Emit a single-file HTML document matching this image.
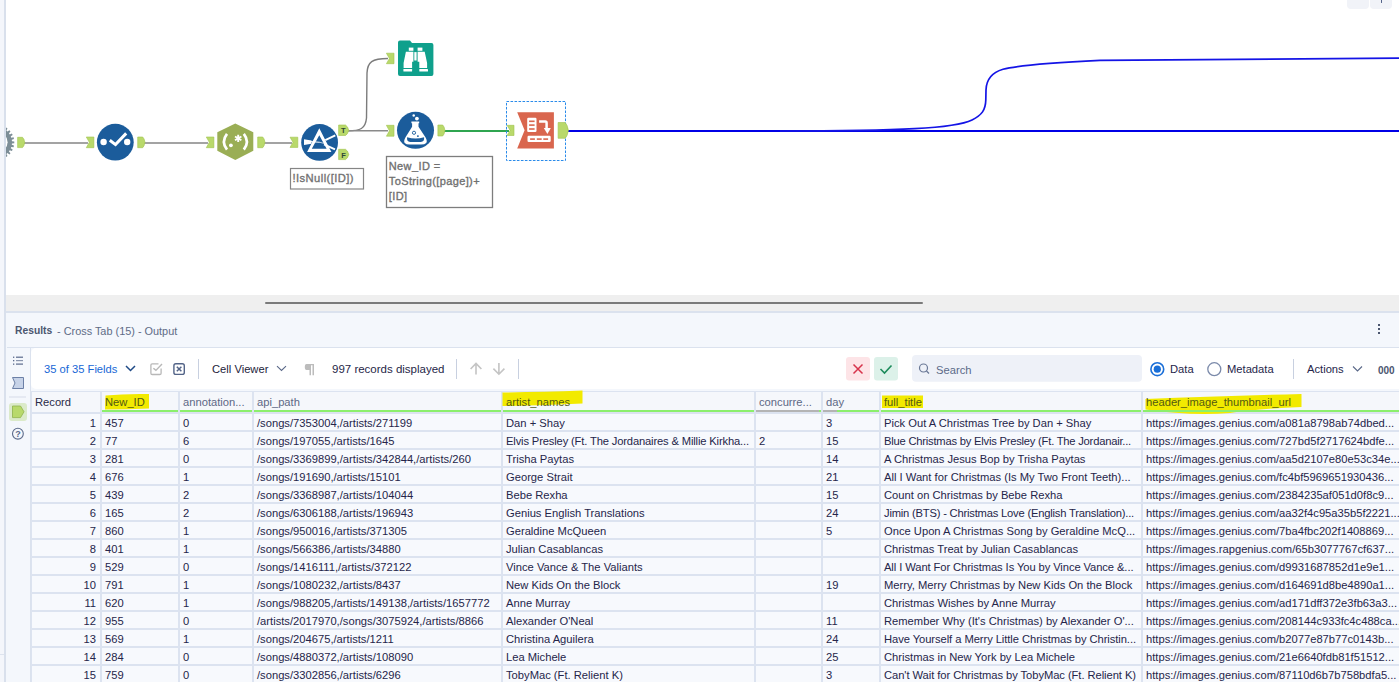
<!DOCTYPE html>
<html><head><meta charset="utf-8">
<style>
*{box-sizing:border-box;margin:0;padding:0}
html,body{width:1399px;height:682px;overflow:hidden;background:#fff;font-family:"Liberation Sans",sans-serif;position:relative}
.abs{position:absolute}
#canvas{position:absolute;left:0;top:0;width:1399px;height:295px;background:#fff}
#hscroll{position:absolute;left:5px;top:295px;width:1394px;height:16px;background:#efefef}
#thumb{position:absolute;left:260px;top:7px;width:658px;height:2px;background:#7a7a7a;border-radius:1px}
#leftstrip{position:absolute;left:0;top:0;width:6px;height:682px;background:#f4f6fb;border-right:2px solid #d9e0ec}
#results{position:absolute;left:5px;top:311px;width:1394px;height:371px;background:#f4f7fc;border-top:2px solid #dbe2ee}
.t{position:absolute;white-space:nowrap;font-size:11.2px;line-height:14px}
.td{color:#25254a}
.tb{position:absolute;white-space:nowrap;font-size:11.4px;line-height:14px}
</style></head><body>
<div id="canvas">
<svg width="1399" height="295" viewBox="0 0 1399 295" style="position:absolute;left:0;top:0">
<path d="M24 143H88" stroke="#a3a3a3" stroke-width="2" fill="none"/>
<path d="M144 143H208" stroke="#a3a3a3" stroke-width="2" fill="none"/>
<path d="M264 143H292" stroke="#a3a3a3" stroke-width="2" fill="none"/>
<path d="M348 130.8C360 130.8 365.5 129 366.5 118L367 73C367.5 62 372 58.5 388 58.5" stroke="#7c7c7c" stroke-width="1.4" fill="none"/>
<path d="M348 130.8H388" stroke="#8a8a8a" stroke-width="1.6" fill="none"/>
<path d="M444 131H509" stroke="#2fa550" stroke-width="2" fill="none"/>
<path d="M567 131H1399" stroke="#0000e6" stroke-width="2" fill="none"/>
<path d="M780 131C900 131 955 128.5 972 120C982 115 985.5 110 985.8 100L986 90C986.3 80 990.5 73 1003 69.3C1015 66 1040 63.3 1100 60.4C1200 58.8 1300 58.3 1399 58.2" stroke="#1414e6" stroke-width="1.7" fill="none"/>
<path d="M11.96 141.21 L14.28 141.46 L14.28 143.14 L11.96 143.39 L11.79 144.83 L13.98 145.62 L13.58 147.25 L11.27 146.94 L10.75 148.29 L12.69 149.59 L11.91 151.07 L9.74 150.21 L8.92 151.41 L10.49 153.13 L9.38 154.38 L7.48 153.03 L6.39 154.00 L7.50 156.05 L6.13 157.00 L4.60 155.23 L3.32 155.90 L3.91 158.16 L2.35 158.75 L1.29 156.67 L-0.12 157.02 L-0.09 159.35 L-1.75 159.55 L-2.28 157.28 L-3.72 157.28 L-4.25 159.55 L-5.91 159.35 L-5.88 157.02 L-7.29 156.67 L-8.35 158.75 L-9.91 158.16 L-9.32 155.90 L-10.60 155.23 L-12.13 157.00 L-13.50 156.05 L-12.39 154.00 L-13.48 153.03 L-15.38 154.38 L-16.49 153.13 L-14.92 151.41 L-15.74 150.21 L-17.91 151.07 L-18.69 149.59 L-16.75 148.29 L-17.27 146.94 L-19.58 147.25 L-19.98 145.62 L-17.79 144.83 L-17.96 143.39 L-20.28 143.14 L-20.28 141.46 L-17.96 141.21 L-17.79 139.77 L-19.98 138.98 L-19.58 137.35 L-17.27 137.66 L-16.75 136.31 L-18.69 135.01 L-17.91 133.53 L-15.74 134.39 L-14.92 133.19 L-16.49 131.47 L-15.38 130.22 L-13.48 131.57 L-12.39 130.60 L-13.50 128.55 L-12.13 127.60 L-10.60 129.37 L-9.32 128.70 L-9.91 126.44 L-8.35 125.85 L-7.29 127.93 L-5.88 127.58 L-5.91 125.25 L-4.25 125.05 L-3.72 127.32 L-2.28 127.32 L-1.75 125.05 L-0.09 125.25 L-0.12 127.58 L1.29 127.93 L2.35 125.85 L3.91 126.44 L3.32 128.70 L4.60 129.37 L6.13 127.60 L7.50 128.55 L6.39 130.60 L7.48 131.57 L9.38 130.22 L10.49 131.47 L8.92 133.19 L9.74 134.39 L11.91 133.53 L12.69 135.01 L10.75 136.31 L11.27 137.66 L13.58 137.35 L13.98 138.98 L11.79 139.77Z" fill="#7d8e97"/>
<circle cx="-3" cy="142.3" r="10.6" fill="#fff"/>
<path d="M17.6 137.3H22.5Q24.1 138.5 24.8 142.4Q24.1 146.4 22.5 147.6H17.6Z" fill="#b9d96b" stroke="#9fc24e" stroke-width="0.6"/>
<path d="M86.3 137H93.9V147.7H86.3L89.3 142.3Z" fill="#b9d96b" stroke="#9fc24e" stroke-width="0.6"/>
<circle cx="115.3" cy="142.2" r="18.4" fill="#1b5c9b"/>
<circle cx="103.6" cy="142" r="3.2" fill="#fff"/><circle cx="127.2" cy="142" r="3.2" fill="#fff"/>
<path d="M109.8 140.2L115.5 144.6L126.2 133.4" stroke="#fff" stroke-width="3" fill="none"/>
<path d="M137.7 137H142.7Q144.3 138.3 145 142.3Q144.3 146.4 142.7 147.7H137.7Z" fill="#b9d96b" stroke="#9fc24e" stroke-width="0.6"/>
<path d="M206.3 137H213.9V147.7H206.3L209.3 142.3Z" fill="#b9d96b" stroke="#9fc24e" stroke-width="0.6"/>
<polygon points="235.3,123.5 253.3,132.3 253.3,150.7 235.3,159.9 217.3,150.7 217.3,132.3" fill="#9aae55"/>
<path d="M227 133.8Q220.8 141.7 227 149.6M243.8 133.8Q250 141.7 243.8 149.6" stroke="#fff" stroke-width="2.7" fill="none"/>
<circle cx="230.9" cy="145.3" r="1.9" fill="#fff"/>
<path d="M238.20 134.70L238.20 142.10M235.00 136.55L241.40 140.25M235.00 140.25L241.40 136.55" stroke="#fff" stroke-width="1.9" fill="none"/>
<path d="M257.7 137H262.7Q264.3 138.3 265 142.3Q264.3 146.4 262.7 147.7H257.7Z" fill="#b9d96b" stroke="#9fc24e" stroke-width="0.6"/>
<path d="M290 137.2H297.8V147.4H290L293 142.3Z" fill="#b9d96b" stroke="#9fc24e" stroke-width="0.6"/>
<circle cx="319.6" cy="142.4" r="18.4" fill="#1b5c9b"/>
<path d="M319.3 128.2L331.4 152H307.1Z M319.3 135.3L311.8 148.8H326.6Z" fill="#fff" fill-rule="evenodd"/>
<path d="M304 139.2L311.5 140.6L311.5 143.8L304 145.1Z" fill="#fff"/>
<path d="M311 141.6L319.8 142.3" stroke="#fff" stroke-width="1"/>
<path d="M325.3 140.2L335.3 135.4M324 144.4L335 149.4" stroke="#fff" stroke-width="1.9"/>
<path d="M319.8 142.3Q324 142.8 326 145" stroke="#fff" stroke-width="0.7" fill="none"/>
<path d="M338.6 125H345.5Q347.8 126.3 348.8 130.2Q347.8 134.2 345.5 135.5H338.6Z" fill="#b9d96b" stroke="#9fc24e" stroke-width="0.6"/>
<path d="M338.6 149.3H345.5Q347.8 150.5 348.8 154.4Q347.8 158.4 345.5 159.6H338.6Z" fill="#b9d96b" stroke="#9fc24e" stroke-width="0.6"/>
<text x="341.1" y="133.1" font-family="Liberation Sans" font-weight="bold" font-size="7.5" fill="#2e4636">T</text>
<text x="341.3" y="157.5" font-family="Liberation Sans" font-weight="bold" font-size="7.5" fill="#2e4636">F</text>
<rect x="290.5" y="168.5" width="73" height="20.5" fill="#fff" stroke="#858585" stroke-width="1.2"/>
<text x="292.5" y="181.6" font-family="Liberation Sans" font-size="11.2" letter-spacing="0.43" fill="#727272" stroke="#727272" stroke-width="0.35">!IsNull([ID])</text>
<path d="M386.4 53.2H394V63.7H386.4L389.4 58.5Z" fill="#b9d96b" stroke="#9fc24e" stroke-width="0.6"/>
<path d="M400 40.4H410L412 43H431.5Q433.4 43 433.4 45V74Q433.4 76 431.5 76H400Q398 76 398 74V42.4Q398 40.4 400 40.4Z" fill="#0fa08c"/>
<rect x="408.8" y="47.6" width="4.6" height="3.2" fill="#fff"/><rect x="417.6" y="47.6" width="4.8" height="3.2" fill="#fff"/>
<path d="M405.9 51.8H413.4V61.8H412.1V67.9H403.6V63.1Z" fill="#fff"/>
<path d="M417.6 51.8H424.7L427.1 63.1V67.9H419.3V61.8H417.6Z" fill="#fff"/>
<rect x="414.3" y="52.1" width="2.3" height="8.4" fill="#fff"/>
<rect x="403.4" y="68.9" width="8.7" height="2.6" rx="0.5" fill="#fff"/><rect x="419.3" y="68.9" width="8.7" height="2.6" rx="0.5" fill="#fff"/>
<path d="M386.4 125.3H394V136.2H386.4L389.4 130.8Z" fill="#b9d96b" stroke="#9fc24e" stroke-width="0.6"/>
<circle cx="415.5" cy="130.3" r="18.5" fill="#1b5c9b"/>
<path d="M411.4 121.6H419.2V123.2H418.5V126.7L425.6 137.5Q427.6 141 426.2 143Q424.8 144.6 421 144.6H409.8Q406 144.6 404.7 143Q403.4 141 405.4 137.5L412.1 126.7V123.2H411.4Z" fill="#fff"/>
<path d="M407.1 137.2Q415.5 139.8 424.1 137.2Q424.6 141.6 420.8 142H410.2Q406.5 141.6 407.1 137.2Z" fill="#1b5c9b"/>
<circle cx="414" cy="132.8" r="1.6" fill="none" stroke="#1b5c9b" stroke-width="0.9"/><circle cx="417.9" cy="136.1" r="0.95" fill="#1b5c9b"/>
<circle cx="413.7" cy="115.4" r="1.25" fill="#fff"/><circle cx="416.9" cy="118.6" r="1.9" fill="#fff"/>
<path d="M437.9 125H442.7Q444.3 126.3 445 130.5Q444.3 134.7 442.7 136H437.9Z" fill="#b9d96b" stroke="#9fc24e" stroke-width="0.6"/>
<rect x="386.5" y="156.5" width="106" height="51" fill="#fff" stroke="#7d7d7d" stroke-width="1.3"/>
<text font-family="Liberation Sans" font-size="11" letter-spacing="0.38" fill="#707070" stroke="#707070" stroke-width="0.35"><tspan x="388.8" y="169.5">New_ID =</tspan><tspan x="388.8" y="184.6">ToString([page])+</tspan><tspan x="388.8" y="199.7">[ID]</tspan></text>
<rect x="506.5" y="101.5" width="59" height="59" fill="none" stroke="#2a8bea" stroke-width="1" stroke-dasharray="2.6,1.4"/>
<path d="M507.1 125.3H514V135.5H507.1L510.1 130.4Z" fill="#b9d96b" stroke="#9fc24e" stroke-width="0.6"/>
<polygon points="517.2,112.2 553.9,112.2 553.9,148.6 517.2,148.6 524.6,130.3" fill="#d9664e"/>
<rect x="527.2" y="117.7" width="9.3" height="14.2" rx="1.2" fill="#fff"/>
<rect x="529.1" y="120.5" width="5.5" height="1.6" fill="#d9664e"/><rect x="529.1" y="124.3" width="5.5" height="1.6" fill="#d9664e"/><rect x="529.1" y="128.2" width="5.5" height="1.6" fill="#d9664e"/>
<path d="M539.1 121.5H545.3Q546.6 121.5 546.6 123V128.5" stroke="#fff" stroke-width="2.5" fill="none"/><path d="M543.8 128H550.8L547.4 133.9Z" fill="#fff"/>
<rect x="527.5" y="135.7" width="23.2" height="6.2" rx="1.2" fill="#fff"/>
<rect x="530.1" y="138.3" width="4.8" height="1.6" fill="#d9664e"/><rect x="536.8" y="138.3" width="4.9" height="1.6" fill="#d9664e"/><rect x="543.3" y="138.3" width="4.8" height="1.6" fill="#d9664e"/>
<path d="M558.1 122.5H565.1Q567.4 124.4 568.4 130.4Q567.4 136.4 565.1 138.3H558.1Z" fill="#b9d96b" stroke="#9fc24e" stroke-width="0.6"/>
</svg>
<div class="abs" style="left:1347px;top:-4px;width:22px;height:13px;background:#f1f3f8;border-radius:4px"></div>
<div class="abs" style="left:1370px;top:-4px;width:22px;height:13px;background:#f1f3f8;border-radius:4px"></div>
<div class="abs" style="left:1380.8px;top:0;width:1.4px;height:3px;background:#52628a;border-radius:0 0 1px 1px"></div>
</div>
<div id="hscroll"><div id="thumb"></div></div>
<div id="results"></div>
<!-- results header -->
<div class="tb" style="left:15px;top:324px;color:#4b566f;font-weight:bold;font-size:10.3px">Results</div>
<div class="tb" style="left:57px;top:323.6px;color:#5e6b86;font-size:10.9px">- Cross Tab (15) - Output</div>
<div class="abs" style="left:1378px;top:324px;width:2px;height:2px;background:#4b566f"></div>
<div class="abs" style="left:1378px;top:328px;width:2px;height:2px;background:#4b566f"></div>
<div class="abs" style="left:1378px;top:332px;width:2px;height:2px;background:#4b566f"></div>
<div class="abs" style="left:7px;top:347px;width:1392px;height:1px;background:#dbe2ee"></div>
<!-- sidebar -->
<div class="abs" style="left:30px;top:348px;width:1px;height:334px;background:#dbe2ee"></div>
<svg class="abs" style="left:0;top:340px" width="31" height="110">
<g fill="#5b6a8c">
<rect x="13" y="16.6" width="1.3" height="1.3"/><rect x="16" y="16.6" width="7" height="1.2"/>
<rect x="13" y="20" width="1.3" height="1.3"/><rect x="16" y="20" width="7" height="1.2" fill="#8a96ae"/>
<rect x="13" y="23.5" width="1.3" height="1.3"/><rect x="16" y="23.5" width="7" height="1.2"/>
</g>
<path d="M12.5 37.5H23.5V48.5H12.5L15 43Z" fill="#c7d3e8" stroke="#6c80a6" stroke-width="1"/>
<rect x="9" y="56.5" width="17" height="1" fill="#d5dbe7"/>
<rect x="9" y="63" width="18" height="18" rx="3" fill="#dbeac9"/>
<path d="M12.5 66H20.5L24 71.8L20.5 77.6H12.5Z" fill="#b8d96b" stroke="#8fb24b" stroke-width="0.8"/>
<circle cx="17.9" cy="93.7" r="5.4" fill="none" stroke="#5b6a8a" stroke-width="1.1"/>
<text x="17.9" y="96.8" font-family="Liberation Sans" font-size="9" font-weight="bold" fill="#5b6a8a" text-anchor="middle">?</text>
</svg>
<!-- toolbar -->
<div class="abs" style="left:31px;top:348px;width:1368px;height:41px;background:#fff;border-radius:5px 0 0 5px"></div>
<div class="tb" style="left:44px;top:362px;color:#1767d6;font-size:11.2px">35 of 35 Fields</div>
<svg class="abs" style="left:0;top:340px" width="1399" height="50">
<path d="M126 26L130.5 30.5L135 26" stroke="#1f4a86" stroke-width="1.5" fill="none"/>
<path d="M158.5 23.8H152.2Q150.9 23.8 150.9 25.1V33.2Q150.9 34.5 152.2 34.5H159.8Q161.1 34.5 161.1 33.2V28.6" stroke="#b8b8b8" stroke-width="1.3" fill="none"/>
<path d="M153.4 28.2L155.9 30.4L162 23.9" stroke="#b8b8b8" stroke-width="1.4" fill="none"/>
<rect x="173.9" y="23.8" width="10.4" height="10.6" rx="2" fill="none" stroke="#536488" stroke-width="1.4"/>
<path d="M176.8 26.8L181.4 31.3M181.4 26.8L176.8 31.3" stroke="#536488" stroke-width="1.5"/>
<rect x="198" y="19" width="1" height="20" fill="#c8d0e0"/>
<path d="M277 26.2L281.5 30.5L286 26.2" stroke="#5a6888" stroke-width="1.1" fill="none"/>
<rect x="456" y="19" width="1" height="20" fill="#c8d0e0"/>
<path d="M476 34.6V23.8M470.6 29L476 23.5L481.4 29" stroke="#c4c4c4" stroke-width="1.6" fill="none"/>
<path d="M498.9 23V34M493.4 28.6L498.9 34.2L504.4 28.6" stroke="#c4c4c4" stroke-width="1.6" fill="none"/>
<rect x="518" y="19" width="1" height="20" fill="#c8d0e0"/>
<rect x="846" y="17" width="24" height="23.5" rx="3" fill="#fde4e7"/>
<path d="M853.5 24.5L862.5 33.5M862.5 24.5L853.5 33.5" stroke="#d7334b" stroke-width="1.5"/>
<rect x="874" y="17" width="24" height="23.5" rx="3" fill="#dcf1e9"/>
<path d="M880.5 29L884.5 33L891.5 25.5" stroke="#1c8b5b" stroke-width="1.6" fill="none"/>
<rect x="912" y="15" width="230" height="26.7" rx="4" fill="#eef1f8"/>
<circle cx="923.5" cy="28" r="4" fill="none" stroke="#6a7896" stroke-width="1.2"/>
<path d="M926.5 31L929 33.5" stroke="#6a7896" stroke-width="1.2"/>
<circle cx="1157.3" cy="29.2" r="6.4" fill="none" stroke="#1a6fd8" stroke-width="1.6"/>
<circle cx="1157.3" cy="29.2" r="3.6" fill="#1a6fd8"/>
<circle cx="1214.3" cy="29.2" r="6.5" fill="none" stroke="#7b8aaa" stroke-width="1.3"/>
<rect x="1293" y="19" width="1" height="20" fill="#c8d0e0"/>
<path d="M1353 26.5L1357.5 31L1362 26.5" stroke="#5a6888" stroke-width="1.1" fill="none"/>
</svg>
<div class="tb" style="left:212px;top:362px;color:#23233a;font-size:11.2px">Cell Viewer</div>
<svg class="abs" style="left:300px;top:360px" width="20" height="20"><path d="M11.5 4H6.5Q4.8 4 4.8 7Q4.8 10 6.5 10H9.5V15.2H11V5.2H12.5V15.2H14V4Z" fill="#bcbcbc"/></svg>
<div class="tb" style="left:332px;top:362px;color:#1f1f48;font-size:11.5px">997 records displayed</div>
<div class="tb" style="left:936px;top:363px;color:#5b6a88;font-size:11.2px">Search</div>
<div class="tb" style="left:1170px;top:362px;color:#25254a;font-size:11.2px">Data</div>
<div class="tb" style="left:1227px;top:362px;color:#25254a;font-size:11.2px">Metadata</div>
<div class="tb" style="left:1307px;top:362px;color:#25254a;font-size:11.2px">Actions</div>
<div class="tb" style="left:1378px;top:364px;color:#4b566f;font-size:10px;font-weight:bold">000</div>
<div class="abs" style="left:31px;top:391px;width:1368px;height:291px;background:#dce3f0"></div>
<div class="abs" style="left:32px;top:392px;width:68px;height:20px;background:#f5f7fb"></div>
<div class="abs" style="left:102px;top:392px;width:76px;height:20px;background:#f5f7fb"></div>
<div class="abs" style="left:180px;top:392px;width:72px;height:20px;background:#f5f7fb"></div>
<div class="abs" style="left:254px;top:392px;width:247px;height:20px;background:#f5f7fb"></div>
<div class="abs" style="left:503px;top:392px;width:251px;height:20px;background:#f5f7fb"></div>
<div class="abs" style="left:756px;top:392px;width:65px;height:20px;background:#f5f7fb"></div>
<div class="abs" style="left:823px;top:392px;width:56px;height:20px;background:#f5f7fb"></div>
<div class="abs" style="left:881px;top:392px;width:260px;height:20px;background:#f5f7fb"></div>
<div class="abs" style="left:1143px;top:392px;width:256px;height:20px;background:#f5f7fb"></div>
<svg class="abs" style="left:0;top:385px" width="1399" height="35"><g fill="#f2ea00" transform="translate(0,-385)"><path d="M105.5 395.5Q125 393.5 149 394V408.5Q128 409.5 105 409.5Z"/><path d="M502.5 392.5Q540 392 582.5 390.5V403.5Q545 405.5 502.5 406Z"/><path d="M882 395.5H923V408H882Z"/><path d="M1145.5 399Q1220 396 1301.5 394V407Q1260 408.5 1230 413Q1190 416 1145.5 409.5Z"/></g></svg>
<div class="abs" style="left:102px;top:410px;width:76px;height:2px;background:#8cef6c"></div>
<div class="abs" style="left:180px;top:410px;width:72px;height:2px;background:#8cef6c"></div>
<div class="abs" style="left:254px;top:410px;width:247px;height:2px;background:#8cef6c"></div>
<div class="abs" style="left:503px;top:410px;width:251px;height:2px;background:#8cef6c"></div>
<div class="abs" style="left:756px;top:410px;width:63px;height:2px;background:#b4b4b4"></div>
<div class="abs" style="left:819px;top:410px;width:2px;height:2px;background:#8cef6c"></div>
<div class="abs" style="left:823px;top:410px;width:14px;height:2px;background:#b4b4b4"></div>
<div class="abs" style="left:837px;top:410px;width:42px;height:2px;background:#8cef6c"></div>
<div class="abs" style="left:881px;top:410px;width:260px;height:2px;background:#8cef6c"></div>
<div class="abs" style="left:1143px;top:410px;width:256px;height:2px;background:#8cef6c"></div>
<div class="t" style="left:35px;top:395px;color:#2a2a48">Record</div>
<div class="t" style="left:105px;top:395px;color:#535a12">New_ID</div>
<div class="t" style="left:183px;top:395px;color:#5d6885">annotation...</div>
<div class="t" style="left:257px;top:395px;color:#5d6885">api_path</div>
<div class="t" style="left:506px;top:395px;color:#535a12">artist_names</div>
<div class="t" style="left:759px;top:395px;color:#5d6885">concurre...</div>
<div class="t" style="left:826px;top:395px;color:#5d6885">day</div>
<div class="t" style="left:884px;top:395px;color:#535a12">full_title</div>
<div class="t" style="left:1146px;top:395px;color:#535a12">header_image_thumbnail_url</div>
<div class="abs" style="left:32px;top:414px;width:68px;height:16px;background:#f7f9fd"></div>
<div class="t td" style="left:32px;width:64px;top:416px;text-align:right">1</div>
<div class="abs" style="left:102px;top:414px;width:76px;height:16px;background:#f7f9fd"></div>
<div class="t td" style="left:105px;top:416px;">457</div>
<div class="abs" style="left:180px;top:414px;width:72px;height:16px;background:#f7f9fd"></div>
<div class="t td" style="left:183px;top:416px;">0</div>
<div class="abs" style="left:254px;top:414px;width:247px;height:16px;background:#f7f9fd"></div>
<div class="t td" style="left:257px;top:416px;">/songs/7353004,/artists/271199</div>
<div class="abs" style="left:503px;top:414px;width:251px;height:16px;background:#f7f9fd"></div>
<div class="t td" style="left:506px;top:416px;">Dan + Shay</div>
<div class="abs" style="left:756px;top:414px;width:65px;height:16px;background:#f7f9fd"></div>
<div class="abs" style="left:823px;top:414px;width:56px;height:16px;background:#f7f9fd"></div>
<div class="t td" style="left:826px;top:416px;">3</div>
<div class="abs" style="left:881px;top:414px;width:260px;height:16px;background:#f7f9fd"></div>
<div class="t td" style="left:884px;top:416px;">Pick Out A Christmas Tree by Dan + Shay</div>
<div class="abs" style="left:1143px;top:414px;width:256px;height:16px;background:#f7f9fd"></div>
<div class="t td" style="left:1146px;top:416px;">https://images.genius.com/a081a8798ab74dbed...</div>
<div class="abs" style="left:32px;top:432px;width:68px;height:16px;background:#f7f9fd"></div>
<div class="t td" style="left:32px;width:64px;top:434px;text-align:right">2</div>
<div class="abs" style="left:102px;top:432px;width:76px;height:16px;background:#f7f9fd"></div>
<div class="t td" style="left:105px;top:434px;">77</div>
<div class="abs" style="left:180px;top:432px;width:72px;height:16px;background:#f7f9fd"></div>
<div class="t td" style="left:183px;top:434px;">6</div>
<div class="abs" style="left:254px;top:432px;width:247px;height:16px;background:#f7f9fd"></div>
<div class="t td" style="left:257px;top:434px;">/songs/197055,/artists/1645</div>
<div class="abs" style="left:503px;top:432px;width:251px;height:16px;background:#f7f9fd"></div>
<div class="t td" style="left:506px;top:434px;letter-spacing:-0.151px;">Elvis Presley (Ft. The Jordanaires &amp; Millie Kirkha...</div>
<div class="abs" style="left:756px;top:432px;width:65px;height:16px;background:#f7f9fd"></div>
<div class="t td" style="left:759px;top:434px;">2</div>
<div class="abs" style="left:823px;top:432px;width:56px;height:16px;background:#f7f9fd"></div>
<div class="t td" style="left:826px;top:434px;">15</div>
<div class="abs" style="left:881px;top:432px;width:260px;height:16px;background:#f7f9fd"></div>
<div class="t td" style="left:884px;top:434px;letter-spacing:-0.216px;">Blue Christmas by Elvis Presley (Ft. The Jordanair...</div>
<div class="abs" style="left:1143px;top:432px;width:256px;height:16px;background:#f7f9fd"></div>
<div class="t td" style="left:1146px;top:434px;">https://images.genius.com/727bd5f2717624bdfe...</div>
<div class="abs" style="left:32px;top:450px;width:68px;height:16px;background:#f7f9fd"></div>
<div class="t td" style="left:32px;width:64px;top:452px;text-align:right">3</div>
<div class="abs" style="left:102px;top:450px;width:76px;height:16px;background:#f7f9fd"></div>
<div class="t td" style="left:105px;top:452px;">281</div>
<div class="abs" style="left:180px;top:450px;width:72px;height:16px;background:#f7f9fd"></div>
<div class="t td" style="left:183px;top:452px;">0</div>
<div class="abs" style="left:254px;top:450px;width:247px;height:16px;background:#f7f9fd"></div>
<div class="t td" style="left:257px;top:452px;">/songs/3369899,/artists/342844,/artists/260</div>
<div class="abs" style="left:503px;top:450px;width:251px;height:16px;background:#f7f9fd"></div>
<div class="t td" style="left:506px;top:452px;">Trisha Paytas</div>
<div class="abs" style="left:756px;top:450px;width:65px;height:16px;background:#f7f9fd"></div>
<div class="abs" style="left:823px;top:450px;width:56px;height:16px;background:#f7f9fd"></div>
<div class="t td" style="left:826px;top:452px;">14</div>
<div class="abs" style="left:881px;top:450px;width:260px;height:16px;background:#f7f9fd"></div>
<div class="t td" style="left:884px;top:452px;">A Christmas Jesus Bop by Trisha Paytas</div>
<div class="abs" style="left:1143px;top:450px;width:256px;height:16px;background:#f7f9fd"></div>
<div class="t td" style="left:1146px;top:452px;">https://images.genius.com/aa5d2107e80e53c34e...</div>
<div class="abs" style="left:32px;top:468px;width:68px;height:16px;background:#f7f9fd"></div>
<div class="t td" style="left:32px;width:64px;top:470px;text-align:right">4</div>
<div class="abs" style="left:102px;top:468px;width:76px;height:16px;background:#f7f9fd"></div>
<div class="t td" style="left:105px;top:470px;">676</div>
<div class="abs" style="left:180px;top:468px;width:72px;height:16px;background:#f7f9fd"></div>
<div class="t td" style="left:183px;top:470px;">1</div>
<div class="abs" style="left:254px;top:468px;width:247px;height:16px;background:#f7f9fd"></div>
<div class="t td" style="left:257px;top:470px;">/songs/191690,/artists/15101</div>
<div class="abs" style="left:503px;top:468px;width:251px;height:16px;background:#f7f9fd"></div>
<div class="t td" style="left:506px;top:470px;">George Strait</div>
<div class="abs" style="left:756px;top:468px;width:65px;height:16px;background:#f7f9fd"></div>
<div class="abs" style="left:823px;top:468px;width:56px;height:16px;background:#f7f9fd"></div>
<div class="t td" style="left:826px;top:470px;">21</div>
<div class="abs" style="left:881px;top:468px;width:260px;height:16px;background:#f7f9fd"></div>
<div class="t td" style="left:884px;top:470px;">All I Want for Christmas (Is My Two Front Teeth)...</div>
<div class="abs" style="left:1143px;top:468px;width:256px;height:16px;background:#f7f9fd"></div>
<div class="t td" style="left:1146px;top:470px;">https://images.genius.com/fc4bf5969651930436...</div>
<div class="abs" style="left:32px;top:486px;width:68px;height:16px;background:#f7f9fd"></div>
<div class="t td" style="left:32px;width:64px;top:488px;text-align:right">5</div>
<div class="abs" style="left:102px;top:486px;width:76px;height:16px;background:#f7f9fd"></div>
<div class="t td" style="left:105px;top:488px;">439</div>
<div class="abs" style="left:180px;top:486px;width:72px;height:16px;background:#f7f9fd"></div>
<div class="t td" style="left:183px;top:488px;">2</div>
<div class="abs" style="left:254px;top:486px;width:247px;height:16px;background:#f7f9fd"></div>
<div class="t td" style="left:257px;top:488px;">/songs/3368987,/artists/104044</div>
<div class="abs" style="left:503px;top:486px;width:251px;height:16px;background:#f7f9fd"></div>
<div class="t td" style="left:506px;top:488px;">Bebe Rexha</div>
<div class="abs" style="left:756px;top:486px;width:65px;height:16px;background:#f7f9fd"></div>
<div class="abs" style="left:823px;top:486px;width:56px;height:16px;background:#f7f9fd"></div>
<div class="t td" style="left:826px;top:488px;">15</div>
<div class="abs" style="left:881px;top:486px;width:260px;height:16px;background:#f7f9fd"></div>
<div class="t td" style="left:884px;top:488px;">Count on Christmas by Bebe Rexha</div>
<div class="abs" style="left:1143px;top:486px;width:256px;height:16px;background:#f7f9fd"></div>
<div class="t td" style="left:1146px;top:488px;">https://images.genius.com/2384235af051d0f8c9...</div>
<div class="abs" style="left:32px;top:504px;width:68px;height:16px;background:#f7f9fd"></div>
<div class="t td" style="left:32px;width:64px;top:506px;text-align:right">6</div>
<div class="abs" style="left:102px;top:504px;width:76px;height:16px;background:#f7f9fd"></div>
<div class="t td" style="left:105px;top:506px;">165</div>
<div class="abs" style="left:180px;top:504px;width:72px;height:16px;background:#f7f9fd"></div>
<div class="t td" style="left:183px;top:506px;">2</div>
<div class="abs" style="left:254px;top:504px;width:247px;height:16px;background:#f7f9fd"></div>
<div class="t td" style="left:257px;top:506px;">/songs/6306188,/artists/196943</div>
<div class="abs" style="left:503px;top:504px;width:251px;height:16px;background:#f7f9fd"></div>
<div class="t td" style="left:506px;top:506px;">Genius English Translations</div>
<div class="abs" style="left:756px;top:504px;width:65px;height:16px;background:#f7f9fd"></div>
<div class="abs" style="left:823px;top:504px;width:56px;height:16px;background:#f7f9fd"></div>
<div class="t td" style="left:826px;top:506px;">24</div>
<div class="abs" style="left:881px;top:504px;width:260px;height:16px;background:#f7f9fd"></div>
<div class="t td" style="left:884px;top:506px;letter-spacing:-0.198px;">Jimin (BTS) - Christmas Love (English Translation)...</div>
<div class="abs" style="left:1143px;top:504px;width:256px;height:16px;background:#f7f9fd"></div>
<div class="t td" style="left:1146px;top:506px;">https://images.genius.com/aa32f4c95a35b5f2221...</div>
<div class="abs" style="left:32px;top:522px;width:68px;height:16px;background:#f7f9fd"></div>
<div class="t td" style="left:32px;width:64px;top:524px;text-align:right">7</div>
<div class="abs" style="left:102px;top:522px;width:76px;height:16px;background:#f7f9fd"></div>
<div class="t td" style="left:105px;top:524px;">860</div>
<div class="abs" style="left:180px;top:522px;width:72px;height:16px;background:#f7f9fd"></div>
<div class="t td" style="left:183px;top:524px;">1</div>
<div class="abs" style="left:254px;top:522px;width:247px;height:16px;background:#f7f9fd"></div>
<div class="t td" style="left:257px;top:524px;">/songs/950016,/artists/371305</div>
<div class="abs" style="left:503px;top:522px;width:251px;height:16px;background:#f7f9fd"></div>
<div class="t td" style="left:506px;top:524px;">Geraldine McQueen</div>
<div class="abs" style="left:756px;top:522px;width:65px;height:16px;background:#f7f9fd"></div>
<div class="abs" style="left:823px;top:522px;width:56px;height:16px;background:#f7f9fd"></div>
<div class="t td" style="left:826px;top:524px;">5</div>
<div class="abs" style="left:881px;top:522px;width:260px;height:16px;background:#f7f9fd"></div>
<div class="t td" style="left:884px;top:524px;">Once Upon A Christmas Song by Geraldine McQ...</div>
<div class="abs" style="left:1143px;top:522px;width:256px;height:16px;background:#f7f9fd"></div>
<div class="t td" style="left:1146px;top:524px;">https://images.genius.com/7ba4fbc202f1408869...</div>
<div class="abs" style="left:32px;top:540px;width:68px;height:16px;background:#f7f9fd"></div>
<div class="t td" style="left:32px;width:64px;top:542px;text-align:right">8</div>
<div class="abs" style="left:102px;top:540px;width:76px;height:16px;background:#f7f9fd"></div>
<div class="t td" style="left:105px;top:542px;">401</div>
<div class="abs" style="left:180px;top:540px;width:72px;height:16px;background:#f7f9fd"></div>
<div class="t td" style="left:183px;top:542px;">1</div>
<div class="abs" style="left:254px;top:540px;width:247px;height:16px;background:#f7f9fd"></div>
<div class="t td" style="left:257px;top:542px;">/songs/566386,/artists/34880</div>
<div class="abs" style="left:503px;top:540px;width:251px;height:16px;background:#f7f9fd"></div>
<div class="t td" style="left:506px;top:542px;">Julian Casablancas</div>
<div class="abs" style="left:756px;top:540px;width:65px;height:16px;background:#f7f9fd"></div>
<div class="abs" style="left:823px;top:540px;width:56px;height:16px;background:#f7f9fd"></div>
<div class="abs" style="left:881px;top:540px;width:260px;height:16px;background:#f7f9fd"></div>
<div class="t td" style="left:884px;top:542px;">Christmas Treat by Julian Casablancas</div>
<div class="abs" style="left:1143px;top:540px;width:256px;height:16px;background:#f7f9fd"></div>
<div class="t td" style="left:1146px;top:542px;">https://images.rapgenius.com/65b3077767cf637...</div>
<div class="abs" style="left:32px;top:558px;width:68px;height:16px;background:#f7f9fd"></div>
<div class="t td" style="left:32px;width:64px;top:560px;text-align:right">9</div>
<div class="abs" style="left:102px;top:558px;width:76px;height:16px;background:#f7f9fd"></div>
<div class="t td" style="left:105px;top:560px;">529</div>
<div class="abs" style="left:180px;top:558px;width:72px;height:16px;background:#f7f9fd"></div>
<div class="t td" style="left:183px;top:560px;">0</div>
<div class="abs" style="left:254px;top:558px;width:247px;height:16px;background:#f7f9fd"></div>
<div class="t td" style="left:257px;top:560px;">/songs/1416111,/artists/372122</div>
<div class="abs" style="left:503px;top:558px;width:251px;height:16px;background:#f7f9fd"></div>
<div class="t td" style="left:506px;top:560px;">Vince Vance &amp; The Valiants</div>
<div class="abs" style="left:756px;top:558px;width:65px;height:16px;background:#f7f9fd"></div>
<div class="abs" style="left:823px;top:558px;width:56px;height:16px;background:#f7f9fd"></div>
<div class="abs" style="left:881px;top:558px;width:260px;height:16px;background:#f7f9fd"></div>
<div class="t td" style="left:884px;top:560px;letter-spacing:-0.092px;">All I Want For Christmas Is You by Vince Vance &amp;...</div>
<div class="abs" style="left:1143px;top:558px;width:256px;height:16px;background:#f7f9fd"></div>
<div class="t td" style="left:1146px;top:560px;">https://images.genius.com/d9931687852d1e9e1...</div>
<div class="abs" style="left:32px;top:576px;width:68px;height:16px;background:#f7f9fd"></div>
<div class="t td" style="left:32px;width:64px;top:578px;text-align:right">10</div>
<div class="abs" style="left:102px;top:576px;width:76px;height:16px;background:#f7f9fd"></div>
<div class="t td" style="left:105px;top:578px;">791</div>
<div class="abs" style="left:180px;top:576px;width:72px;height:16px;background:#f7f9fd"></div>
<div class="t td" style="left:183px;top:578px;">1</div>
<div class="abs" style="left:254px;top:576px;width:247px;height:16px;background:#f7f9fd"></div>
<div class="t td" style="left:257px;top:578px;">/songs/1080232,/artists/8437</div>
<div class="abs" style="left:503px;top:576px;width:251px;height:16px;background:#f7f9fd"></div>
<div class="t td" style="left:506px;top:578px;">New Kids On the Block</div>
<div class="abs" style="left:756px;top:576px;width:65px;height:16px;background:#f7f9fd"></div>
<div class="abs" style="left:823px;top:576px;width:56px;height:16px;background:#f7f9fd"></div>
<div class="t td" style="left:826px;top:578px;">19</div>
<div class="abs" style="left:881px;top:576px;width:260px;height:16px;background:#f7f9fd"></div>
<div class="t td" style="left:884px;top:578px;">Merry, Merry Christmas by New Kids On the Block</div>
<div class="abs" style="left:1143px;top:576px;width:256px;height:16px;background:#f7f9fd"></div>
<div class="t td" style="left:1146px;top:578px;">https://images.genius.com/d164691d8be4890a1...</div>
<div class="abs" style="left:32px;top:594px;width:68px;height:16px;background:#f7f9fd"></div>
<div class="t td" style="left:32px;width:64px;top:596px;text-align:right">11</div>
<div class="abs" style="left:102px;top:594px;width:76px;height:16px;background:#f7f9fd"></div>
<div class="t td" style="left:105px;top:596px;">620</div>
<div class="abs" style="left:180px;top:594px;width:72px;height:16px;background:#f7f9fd"></div>
<div class="t td" style="left:183px;top:596px;">1</div>
<div class="abs" style="left:254px;top:594px;width:247px;height:16px;background:#f7f9fd"></div>
<div class="t td" style="left:257px;top:596px;">/songs/988205,/artists/149138,/artists/1657772</div>
<div class="abs" style="left:503px;top:594px;width:251px;height:16px;background:#f7f9fd"></div>
<div class="t td" style="left:506px;top:596px;">Anne Murray</div>
<div class="abs" style="left:756px;top:594px;width:65px;height:16px;background:#f7f9fd"></div>
<div class="abs" style="left:823px;top:594px;width:56px;height:16px;background:#f7f9fd"></div>
<div class="abs" style="left:881px;top:594px;width:260px;height:16px;background:#f7f9fd"></div>
<div class="t td" style="left:884px;top:596px;">Christmas Wishes by Anne Murray</div>
<div class="abs" style="left:1143px;top:594px;width:256px;height:16px;background:#f7f9fd"></div>
<div class="t td" style="left:1146px;top:596px;">https://images.genius.com/ad171dff372e3fb63a3...</div>
<div class="abs" style="left:32px;top:612px;width:68px;height:16px;background:#f7f9fd"></div>
<div class="t td" style="left:32px;width:64px;top:614px;text-align:right">12</div>
<div class="abs" style="left:102px;top:612px;width:76px;height:16px;background:#f7f9fd"></div>
<div class="t td" style="left:105px;top:614px;">955</div>
<div class="abs" style="left:180px;top:612px;width:72px;height:16px;background:#f7f9fd"></div>
<div class="t td" style="left:183px;top:614px;">0</div>
<div class="abs" style="left:254px;top:612px;width:247px;height:16px;background:#f7f9fd"></div>
<div class="t td" style="left:257px;top:614px;">/artists/2017970,/songs/3075924,/artists/8866</div>
<div class="abs" style="left:503px;top:612px;width:251px;height:16px;background:#f7f9fd"></div>
<div class="t td" style="left:506px;top:614px;">Alexander O&#x27;Neal</div>
<div class="abs" style="left:756px;top:612px;width:65px;height:16px;background:#f7f9fd"></div>
<div class="abs" style="left:823px;top:612px;width:56px;height:16px;background:#f7f9fd"></div>
<div class="t td" style="left:826px;top:614px;">11</div>
<div class="abs" style="left:881px;top:612px;width:260px;height:16px;background:#f7f9fd"></div>
<div class="t td" style="left:884px;top:614px;">Remember Why (It&#x27;s Christmas) by Alexander O&#x27;...</div>
<div class="abs" style="left:1143px;top:612px;width:256px;height:16px;background:#f7f9fd"></div>
<div class="t td" style="left:1146px;top:614px;">https://images.genius.com/208144c933fc4c488ca...</div>
<div class="abs" style="left:32px;top:630px;width:68px;height:16px;background:#f7f9fd"></div>
<div class="t td" style="left:32px;width:64px;top:632px;text-align:right">13</div>
<div class="abs" style="left:102px;top:630px;width:76px;height:16px;background:#f7f9fd"></div>
<div class="t td" style="left:105px;top:632px;">569</div>
<div class="abs" style="left:180px;top:630px;width:72px;height:16px;background:#f7f9fd"></div>
<div class="t td" style="left:183px;top:632px;">1</div>
<div class="abs" style="left:254px;top:630px;width:247px;height:16px;background:#f7f9fd"></div>
<div class="t td" style="left:257px;top:632px;">/songs/204675,/artists/1211</div>
<div class="abs" style="left:503px;top:630px;width:251px;height:16px;background:#f7f9fd"></div>
<div class="t td" style="left:506px;top:632px;">Christina Aguilera</div>
<div class="abs" style="left:756px;top:630px;width:65px;height:16px;background:#f7f9fd"></div>
<div class="abs" style="left:823px;top:630px;width:56px;height:16px;background:#f7f9fd"></div>
<div class="t td" style="left:826px;top:632px;">24</div>
<div class="abs" style="left:881px;top:630px;width:260px;height:16px;background:#f7f9fd"></div>
<div class="t td" style="left:884px;top:632px;letter-spacing:-0.067px;">Have Yourself a Merry Little Christmas by Christin...</div>
<div class="abs" style="left:1143px;top:630px;width:256px;height:16px;background:#f7f9fd"></div>
<div class="t td" style="left:1146px;top:632px;">https://images.genius.com/b2077e87b77c0143b...</div>
<div class="abs" style="left:32px;top:648px;width:68px;height:16px;background:#f7f9fd"></div>
<div class="t td" style="left:32px;width:64px;top:650px;text-align:right">14</div>
<div class="abs" style="left:102px;top:648px;width:76px;height:16px;background:#f7f9fd"></div>
<div class="t td" style="left:105px;top:650px;">284</div>
<div class="abs" style="left:180px;top:648px;width:72px;height:16px;background:#f7f9fd"></div>
<div class="t td" style="left:183px;top:650px;">0</div>
<div class="abs" style="left:254px;top:648px;width:247px;height:16px;background:#f7f9fd"></div>
<div class="t td" style="left:257px;top:650px;">/songs/4880372,/artists/108090</div>
<div class="abs" style="left:503px;top:648px;width:251px;height:16px;background:#f7f9fd"></div>
<div class="t td" style="left:506px;top:650px;">Lea Michele</div>
<div class="abs" style="left:756px;top:648px;width:65px;height:16px;background:#f7f9fd"></div>
<div class="abs" style="left:823px;top:648px;width:56px;height:16px;background:#f7f9fd"></div>
<div class="t td" style="left:826px;top:650px;">25</div>
<div class="abs" style="left:881px;top:648px;width:260px;height:16px;background:#f7f9fd"></div>
<div class="t td" style="left:884px;top:650px;">Christmas in New York by Lea Michele</div>
<div class="abs" style="left:1143px;top:648px;width:256px;height:16px;background:#f7f9fd"></div>
<div class="t td" style="left:1146px;top:650px;">https://images.genius.com/21e6640fdb81f51512...</div>
<div class="abs" style="left:32px;top:666px;width:68px;height:16px;background:#f7f9fd"></div>
<div class="t td" style="left:32px;width:64px;top:668px;text-align:right">15</div>
<div class="abs" style="left:102px;top:666px;width:76px;height:16px;background:#f7f9fd"></div>
<div class="t td" style="left:105px;top:668px;">759</div>
<div class="abs" style="left:180px;top:666px;width:72px;height:16px;background:#f7f9fd"></div>
<div class="t td" style="left:183px;top:668px;">0</div>
<div class="abs" style="left:254px;top:666px;width:247px;height:16px;background:#f7f9fd"></div>
<div class="t td" style="left:257px;top:668px;">/songs/3302856,/artists/6296</div>
<div class="abs" style="left:503px;top:666px;width:251px;height:16px;background:#f7f9fd"></div>
<div class="t td" style="left:506px;top:668px;">TobyMac (Ft. Relient K)</div>
<div class="abs" style="left:756px;top:666px;width:65px;height:16px;background:#f7f9fd"></div>
<div class="abs" style="left:823px;top:666px;width:56px;height:16px;background:#f7f9fd"></div>
<div class="t td" style="left:826px;top:668px;">3</div>
<div class="abs" style="left:881px;top:666px;width:260px;height:16px;background:#f7f9fd"></div>
<div class="t td" style="left:884px;top:668px;letter-spacing:-0.062px;">Can&#x27;t Wait for Christmas by TobyMac (Ft. Relient K)</div>
<div class="abs" style="left:1143px;top:666px;width:256px;height:16px;background:#f7f9fd"></div>
<div class="t td" style="left:1146px;top:668px;">https://images.genius.com/87110d6b7b758bdfa5...</div>
<div id="leftstrip"></div>
<div class="abs" style="left:0;top:653.5px;width:4px;height:1.5px;background:#dde3ee"></div>
</body></html>
